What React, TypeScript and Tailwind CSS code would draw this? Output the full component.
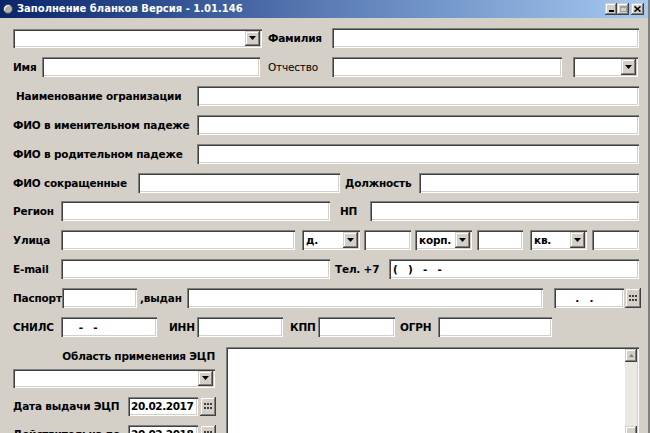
import React from 'react';

const sunken =
  'bg-white shadow-[inset_1px_1px_0_#808080,inset_2px_2px_0_#404040,inset_-1px_-1px_0_#ffffff,inset_-2px_-2px_0_#d4d0c8]';
const raised =
  'bg-[#d4d0c8] shadow-[inset_-1px_-1px_0_#404040,inset_1px_1px_0_#d4d0c8,inset_-2px_-2px_0_#808080,inset_2px_2px_0_#ffffff]';

function Arrow() {
  return (
    <svg width="7" height="4" viewBox="0 0 7 4">
      <path d="M0 0h7L3.5 4z" fill="#000" />
    </svg>
  );
}

function Input({ w, children }: { w: string; children?: React.ReactNode }) {
  return (
    <div className={`${sunken} ${w} h-[20px] shrink-0 flex items-center pl-[4px] font-bold whitespace-pre overflow-hidden`}>
      {children}
    </div>
  );
}

function Combo({ w, value, h = 'h-[20px]' }: { w: string; value?: string; h?: string }) {
  return (
    <div className={`${sunken} ${w} ${h} shrink-0 flex items-center p-[2px]`}>
      <span className="flex-1 pl-[2px] font-bold">{value}</span>
      <div className={`${raised} w-[15px] h-full flex items-center justify-center`}>
        <Arrow />
      </div>
    </div>
  );
}

function DotsButton({ h = 'h-[20px]' }: { h?: string }) {
  return (
    <div className={`${raised} w-[16px] ${h} shrink-0 flex items-center justify-center`}>
      <svg width="8" height="6" viewBox="0 0 8 6">
        {[0, 3, 6].map(x =>
          [0, 4].map(y => <rect key={`${x}-${y}`} x={x} y={y} width="2" height="2" fill="#404040" />)
        )}
      </svg>
    </div>
  );
}

function Label({ w, children, bold = true, pad = '' }: { w: string; children: React.ReactNode; bold?: boolean; pad?: string }) {
  return (
    <div className={`${w} ${pad} shrink-0 whitespace-nowrap ${bold ? 'font-bold' : 'font-normal'}`}>{children}</div>
  );
}

function DateRow({ label, date }: { label: string; date: string }) {
  return (
    <div className="flex items-center">
      <Label w="w-[115px]">{label}</Label>
      <div className={`${sunken} w-[70px] h-[19px] shrink-0 flex items-center pl-[3px] font-bold tracking-[-0.4px]`}>
        {date}
      </div>
      <div className="w-[2px]" />
      <DotsButton h="h-[19px]" />
    </div>
  );
}

export default function App() {
  return (
    <div className="w-[650px] h-[433px] overflow-hidden bg-[#d4d0c8] text-[10.5px] tracking-[-0.2px] leading-none text-black font-['DejaVu_Sans',sans-serif] flex flex-col border-r-2 border-r-[#808080]">
      {/* Title bar */}
      <div className="h-[18px] shrink-0 bg-gradient-to-r from-[#0a246a] via-[#5a7bb5] to-[#a6caf0] flex items-center pl-[3px] pr-[4px]">
        <div className="w-[10px] h-[10px] rounded-full bg-[#b0b0b0] border border-[#404040] shadow-[inset_1px_1px_0_#ffffff]" />
        <span className="ml-[4px] text-white font-bold text-[10px] tracking-normal">Заполнение бланков Версия - 1.01.146</span>
        <div className="ml-auto flex items-center">
          <div className={`${raised} w-[12px] h-[12px] flex items-end justify-center pb-[3px]`}>
            <div className="w-[5px] h-[2px] bg-black" />
          </div>
          <div className={`${raised} w-[12px] h-[12px] flex items-center justify-center`}>
            <div className="w-[7px] h-[6px] border border-t-2 border-[#a0a0a0]" />
          </div>
          <div className={`${raised} ml-[2px] w-[13px] h-[12px] flex items-center justify-center`}>
            <svg width="7" height="6" viewBox="0 0 7 6">
              <path d="M0.5 0.5L6.5 5.5M6.5 0.5L0.5 5.5" stroke="#000" strokeWidth="1.6" />
            </svg>
          </div>
        </div>
      </div>

      <div className="pl-[13px] flex flex-col">
        {/* Фамилия */}
        <div className="mt-[10px] flex items-center">
          <Combo w="w-[249px]" h="h-[19px]" />
          <Label w="w-[70px]" pad="pl-[6px]">Фамилия</Label>
          <Input w="w-[307px]" />
        </div>
        {/* Имя / Отчество */}
        <div className="mt-[9px] flex items-center">
          <Label w="w-[29px]">Имя</Label>
          <Input w="w-[218px]" />
          <Label w="w-[72px]" bold={false} pad="pl-[8px]">Отчество</Label>
          <Input w="w-[230px]" />
          <div className="w-[11px]" />
          <Combo w="w-[65px]" />
        </div>
        <div className="mt-[9px] flex items-center">
          <Label w="w-[184px]" pad="pl-[3px]">Наименование огранизации</Label>
          <Input w="w-[442px]" />
        </div>
        <div className="mt-[9px] flex items-center">
          <Label w="w-[184px]">ФИО в именительном падеже</Label>
          <Input w="w-[442px]" />
        </div>
        <div className="mt-[9px] flex items-center">
          <Label w="w-[184px]">ФИО в родительном падеже</Label>
          <Input w="w-[442px]" />
        </div>
        <div className="mt-[9px] flex items-center">
          <Label w="w-[125px]">ФИО сокращенные</Label>
          <Input w="w-[202px]" />
          <Label w="w-[79px]" pad="pl-[5px]">Должность</Label>
          <Input w="w-[220px]" />
        </div>
        {/* Address */}
        <div className="mt-[8px] flex items-center">
          <Label w="w-[48px]">Регион</Label>
          <Input w="w-[269px]" />
          <Label w="w-[40px]" pad="pl-[10px]">НП</Label>
          <Input w="w-[269px]" />
        </div>
        <div className="mt-[9px] flex items-center">
          <Label w="w-[48px]">Улица</Label>
          <Input w="w-[234px]" />
          <div className="w-[7px]" />
          <Combo w="w-[58px]" value="д." />
          <div className="w-[4px]" />
          <Input w="w-[47px]" />
          <div className="w-[4px]" />
          <Combo w="w-[57px]" value="корп." />
          <div className="w-[5px]" />
          <Input w="w-[46px]" />
          <div className="w-[7px]" />
          <Combo w="w-[57px]" value="кв." />
          <div className="w-[5px]" />
          <Input w="w-[47px]" />
        </div>
        <div className="mt-[9px] flex items-center">
          <Label w="w-[48px]">E-mail</Label>
          <Input w="w-[269px]" />
          <Label w="w-[59px]" pad="pl-[5px]">Тел. +7</Label>
          <Input w="w-[250px]">{'(   )   -   -'}</Input>
        </div>
        {/* Documents */}
        <div className="mt-[9px] flex items-center">
          <Label w="w-[49px]">Паспорт</Label>
          <Input w="w-[75px]" />
          <Label w="w-[50px]" pad="pl-[3px]">,выдан</Label>
          <Input w="w-[356px]" />
          <div className="w-[11px]" />
          <Input w="w-[70px]">{'     .   .'}</Input>
          <div className="w-[1px]" />
          <DotsButton />
        </div>
        <div className="mt-[9px] flex items-center">
          <Label w="w-[48px]">СНИЛС</Label>
          <Input w="w-[96px]">{'    -   -'}</Input>
          <Label w="w-[40px]" pad="pl-[12px]">ИНН</Label>
          <Input w="w-[86px]" />
          <Label w="w-[35px]" pad="pl-[7px]">КПП</Label>
          <Input w="w-[77px]" />
          <Label w="w-[43px]" pad="pl-[5px]">ОГРН</Label>
          <Input w="w-[114px]" />
        </div>

        {/* ЭЦП */}
        <div className="mt-[10px] flex items-start">
          <div className="w-[203px] shrink-0 flex flex-col">
            <div className="mt-[4px] text-right font-bold pr-[1px]">Область применения ЭЦП</div>
            <div className="mt-[7px]">
              <Combo w="w-[202px]" h="h-[19px]" />
            </div>
            <div className="mt-[9px]">
              <DateRow label="Дата выдачи ЭЦП" date="20.02.2017" />
            </div>
            <div className="mt-[9px]">
              <DateRow label="Действительна по" date="20.02.2018" />
            </div>
          </div>
          <div className={`${sunken} ml-[10px] w-[413px] h-[100px] shrink-0 flex justify-end p-[2px]`}>
            <div className="w-[12px] flex flex-col bg-[#ebe8e2]">
              <div className={`${raised} h-[13px] flex items-center justify-center`}>
                <svg width="5" height="3" viewBox="0 0 5 3">
                  <path d="M0 3h5L2.5 0z" fill="#808080" />
                </svg>
              </div>
              <div className="h-[64px]" />
              <div className={`${raised} h-[13px]`} />
            </div>
          </div>
        </div>
      </div>
    </div>
  );
}
